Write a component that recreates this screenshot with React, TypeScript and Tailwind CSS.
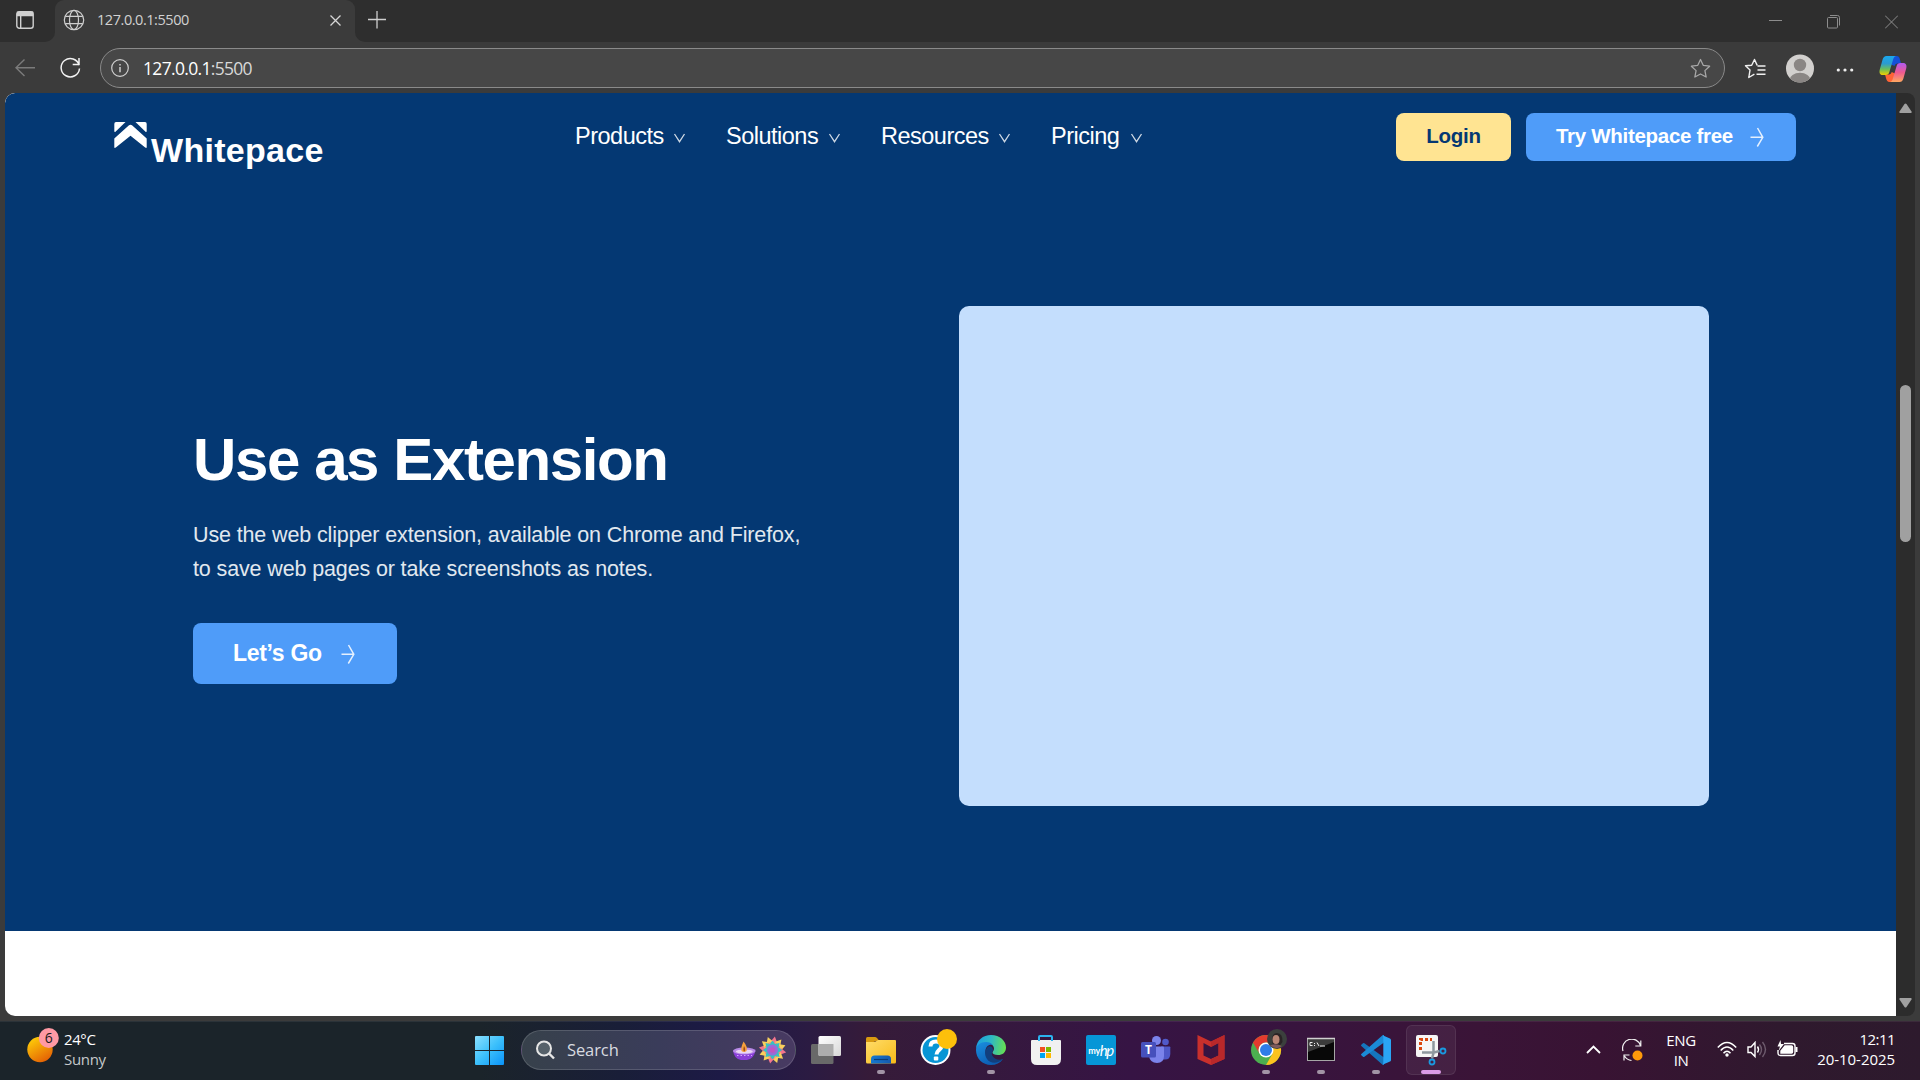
import React from "react";

const UI = "font-['Open_Sans','Noto_Sans',sans-serif]";
const ARIAL = "font-['Liberation_Sans',Arial,sans-serif]";

const TabIcon = () => (
  <svg className="block" width="18" height="18" viewBox="0 0 18 18" fill="none" stroke="#d0d0d0" strokeWidth="1.4">
    <rect x="0.8" y="0.8" width="16.4" height="16.4" rx="2.5" />
    <path d="M1.5 1.2h15v3.4h-15z" fill="#d0d0d0" />
    <path d="M4.7 5v12" />
  </svg>
);

const Globe = () => (
  <svg className="block" width="22" height="22" viewBox="0 0 22 22" fill="none" stroke="#cfcfcf" strokeWidth="1.2">
    <circle cx="11" cy="11" r="9.7" />
    <ellipse cx="11" cy="11" rx="4.5" ry="9.7" />
    <path d="M2.3 7.3h17.4M2.3 14.7h17.4" />
  </svg>
);

const star = "M10 1.4l2.6 5.6 6.1.8-4.5 4.2 1.2 6.1L10 15.2l-5.4 2.9 1.2-6.1L1.3 7.8l6.1-.8z";

const Copilot = () => (
  <svg className="block" width="28" height="28" viewBox="0 0 28 28">
    <defs>
      <linearGradient id="cpA" x1="0" y1="0" x2="0" y2="1">
        <stop offset="0" stopColor="#1aa7ee" />
        <stop offset="0.4" stopColor="#2b9bd0" />
        <stop offset="0.7" stopColor="#6cbf58" />
        <stop offset="1" stopColor="#f2d000" />
      </linearGradient>
      <linearGradient id="cpB" x1="0" y1="0" x2="0" y2="1">
        <stop offset="0" stopColor="#b05af0" />
        <stop offset="0.5" stopColor="#ee5a90" />
        <stop offset="1" stopColor="#ffa860" />
      </linearGradient>
    </defs>
    <path d="M14 1h3.5c2 0 2.800 1.200 3.400 3.200L22 8.500h-3.600c-1.600 0-2.400 1-2.800 2.400L11 9z" fill="#1450d8" />
    <path d="M14 27h-3.500c-2 0-2.800-1.200-3.300-3.200L6 19.500h4c1.500 0 2.300-1 2.700-2.400L17 19z" fill="#ff6436" />
    <path d="M7.500 1H17c-1.700.4-2.300 1.700-2.800 3.300l-3.900 13c-.6 1.900-1.600 2.700-3.600 2.700H4c-3.300 0-4-2.600-3.200-5.600L3.600 4.600C4.300 2.300 5.500 1 7.500 1z" fill="url(#cpA)" />
    <path d="M20.500 27H11c1.700-.4 2.300-1.700 2.800-3.300l3.900-13C18.300 8.800 19.300 8 21.300 8H24c3.300 0 4 2.600 3.200 5.600l-2.800 9.800c-.7 2.300-1.900 3.600-3.900 3.600z" fill="url(#cpB)" />
  </svg>
);

const BrandMark = () => (
  <svg className="block shrink-0" width="33" height="27" viewBox="0 0 33 27" fill="#fff">
    <path d="M2 0h9.500L1.500 9.800Q.3 10.500.3 9V2Q.3 0 2 0z" />
    <path d="M31 0h-9.500l10 9.800q1.200.7 1.200-.8V2Q32.700 0 31 0z" />
    <path d="M14.700 3.600Q16.500 2 18.300 3.600L32.700 16.500V25q0 1.800-1.500.6L16.500 13.700 1.800 25.600Q.3 26.800.3 25v-8.500z" />
  </svg>
);

const Arrow = () => (
  <svg className="block" width="14" height="20" viewBox="0 0 14 20" fill="none" stroke="#fff" strokeOpacity="0.85" strokeWidth="1.5">
    <path d="M0.500 10.300H13M7.500 1L12.800 10.300 7.300 19.500" />
  </svg>
);

const nav = [
  { label: "Products", box: "w-[151px]" },
  { label: "Solutions", box: "w-[155px]" },
  { label: "Resources", box: "w-[170px]" },
  { label: "Pricing", box: "w-[92px]" },
];

function BrowserChrome() {
  return (
    <div className={`${UI} h-[93px] bg-[#3b3b3b]`}>
      <div className="flex h-[42px] bg-[#3b3b3b]">
        <div className="h-[42px] w-[55px] rounded-br-[10px] bg-[#2e2e2e] pl-4 pt-[11px]">
          <TabIcon />
        </div>
        <div className="w-[300px] bg-[#2e2e2e]">
          <div className="flex h-[42px] rounded-t-[9px] bg-[#3b3b3b] pl-2">
            <div className="pt-[9px]"><Globe /></div>
            <div className="ml-[12px] w-[233px] pt-[9px] text-[14.5px] leading-[21px] tracking-[-0.45px] text-[#d2d2d2]">127.0.0.1:5500</div>
            <svg className="mt-[15px]" width="11" height="11" viewBox="0 0 11 11" stroke="#d6d6d6" strokeWidth="1.3"><path d="M.5.5l10 10M10.500.5l-10 10" /></svg>
          </div>
        </div>
        <div className="flex flex-1 rounded-bl-[10px] bg-[#2e2e2e] pl-[13px]">
          <svg className="mt-[11px]" width="18" height="18" viewBox="0 0 18 18" stroke="#cfcfcf" strokeWidth="1.300"><path d="M0 8.500h18M9 0v17.500" /></svg>
          <div className="ml-auto flex gap-[45px] pr-[22px] pt-[15px]">
            <svg width="13" height="14" viewBox="0 0 13 14" stroke="#8d8d8d"><path d="M0 5.500h13" /></svg>
            <svg width="13" height="14" viewBox="0 0 13 14" stroke="#8d8d8d" fill="none"><rect x=".5" y="2.500" width="10" height="10.500" rx="1" /><path d="M3 .5h7.500q2 0 2 2v8" /></svg>
            <svg width="13" height="14" viewBox="0 0 13 14" stroke="#8d8d8d"><path d="M0 .5l13 13M13 .5L0 13.500" /></svg>
          </div>
        </div>
      </div>
      <div className="flex h-[51px] items-start pt-[6px]">
        <svg className="ml-[15px] mt-[11px]" width="20" height="18" viewBox="0 0 20 18" stroke="#7b7b7b" strokeWidth="1.400" fill="none"><path d="M20 8.700H1M9.500.5L1 8.700l8.500 8.300" /></svg>
        <svg className="ml-[25px] mt-[9px]" width="21" height="22" viewBox="0 0 21 22" stroke="#f2f2f2" strokeWidth="1.500" fill="none"><path d="M19.200 8.200A9.200 9.200 0 1 0 19.500 11.500M19 1v6.500h-6.300" /></svg>
        <div className="ml-[19px] flex h-[40px] w-[1625px] items-center rounded-full border border-[#8a8a8a] bg-[#474747]">
          <svg className="ml-[10px]" width="18" height="18" viewBox="0 0 18 18" stroke="#d0d0d0" strokeWidth="1.200" fill="none"><circle cx="9" cy="9" r="8.300" /><path d="M9 8v5.200M9 5v1.600" strokeWidth="1.500" /></svg>
          <div className="ml-[14px] text-[17.500px] leading-[24px] tracking-[-0.68px] text-[#d8d8d8]"><span className="text-white">127.0.0.1</span>:5500</div>
          <svg className="ml-auto mr-[13px]" width="21" height="21" viewBox="0 0 20 20" stroke="#a8a8a8" strokeWidth="1.200" strokeLinejoin="round" fill="none"><path d={star} /></svg>
        </div>
        <svg className="ml-[19px] mt-[10px]" width="22" height="22" viewBox="0 0 22 22" stroke="#f0f0f0" strokeWidth="1.400" strokeLinejoin="round" fill="none"><path d="M13.200 7.400L10.500 1.500 7.700 7.200l-6.200.6 4.500 4.300-1.200 7.400 5.600-3.400M13.500 8H21.500M13.500 12H21.500M12.500 16.200H21.500" /></svg>
        <svg className="ml-[20px] mt-[6px]" width="28" height="29" viewBox="0 0 28 29">
          <defs><clipPath id="av"><circle cx="14" cy="14.500" r="14" /></clipPath></defs>
          <g clipPath="url(#av)"><rect width="28" height="29" fill="#d2d0ce" /><circle cx="14" cy="11" r="6.200" fill="#8a8684" /><ellipse cx="14" cy="26" rx="10.500" ry="7.200" fill="#8a8684" /></g>
        </svg>
        <svg className="ml-[22px] mt-[19px]" width="18" height="6" viewBox="0 0 18 6" fill="#eee"><circle cx="2.300" cy="3" r="1.600" /><circle cx="9" cy="3" r="1.600" /><circle cx="15.700" cy="3" r="1.600" /></svg>
        <div className="ml-[25px] mt-[7px]"><Copilot /></div>
      </div>
    </div>
  );
}

function Page() {
  return (
    <div className={`${ARIAL} flex h-[923px] w-[1891px] flex-col overflow-hidden rounded-l-[10px] bg-white`}>
      <section className="h-[838px] rounded-tl-[10px] bg-[#043873]">
        <header className="flex h-[68px] items-start pl-[109px]">
          <div className="flex w-[461px] pt-[29px]">
            <BrandMark />
            <div className="ml-[4px] mt-[9px] text-[34px] font-bold leading-[38px] tracking-[0.3px] text-white">Whitepace</div>
          </div>
          <nav className="flex w-[821px] pt-[30px]">
            {nav.map((n) => (
              <div key={n.label} className={`${n.box} flex justify-between pr-[40px] last:pr-0`}>
                <span className="text-[23.500px] leading-[26px] tracking-[-0.5px] text-white">{n.label}</span>
                <svg className="mt-[10px] shrink-0" width="13" height="10" viewBox="0 0 13 10" stroke="#fff" strokeOpacity="0.8" strokeWidth="1.300" fill="none"><path d="M1.500 1L6.500 8.700 11.500 1" /></svg>
              </div>
            ))}
          </nav>
          <div className="flex gap-[15px] pt-[20px] text-[20.500px] font-bold">
            <div className="flex h-[48px] w-[115px] items-center justify-center rounded-[8px] bg-[#ffe492] pb-[2px] tracking-[-0.3px] text-[#043873]">Login</div>
            <div className="flex h-[48px] w-[270px] items-center rounded-[8px] bg-[#4f9cf9] pl-[30px] text-white">
              <span className="w-[194px] whitespace-nowrap pb-[2px] tracking-[-0.3px]">Try Whitepace free</span><Arrow />
            </div>
          </div>
        </header>
        <div className="flex pl-[188px]">
          <div className="w-[766px] pt-[264px]">
            <h1 className="text-[60px] font-bold leading-[70px] tracking-[-1.400px] text-white">Use as Extension</h1>
            <p className="mt-[23px] text-[21.500px] leading-[34px] tracking-[-0.13px] text-[#e1e8ef]">
              Use the web clipper extension, available on Chrome and Firefox,<br />to save web pages or take screenshots as notes.
            </p>
            <div className="mt-[37px] flex h-[61px] w-[204px] items-center rounded-[8px] bg-[#4f9cf9] pl-[40px] text-[23px] font-bold text-white">
              <span className="w-[108px] pb-px tracking-[-0.3px]">Let’s Go</span><Arrow />
            </div>
          </div>
          <div className="mt-[145px] h-[500px] w-[750px] rounded-[10px] bg-[#c4defd]" />
        </div>
      </section>
    </div>
  );
}

const Windows = () => (
  <svg width="29" height="29" viewBox="0 0 29 29">
    <defs><linearGradient id="wn" x1="0" y1="0" x2="1" y2="1"><stop offset="0" stopColor="#8be0ff" /><stop offset="0.500" stopColor="#3cc0fb" /><stop offset="1" stopColor="#0a93f8" /></linearGradient></defs>
    <path fill="url(#wn)" d="M1 0h13v14H0V1q0-1 1-1zM15 0h13q1 0 1 1v13H15zM0 15h14v14H1q-1 0-1-1zM15 15h14v13q0 1-1 1H15z" />
  </svg>
);

const Festive = () => (
  <svg width="54" height="28" viewBox="0 0 54 28">
    <path d="M1 14.500Q2 23 9 24h6Q22.500 22.500 23.500 13.500z" fill="#8a3fd8" />
    <ellipse cx="12.300" cy="15" rx="11.400" ry="3.500" fill="#b98be8" />
    <ellipse cx="12.300" cy="15.500" rx="8.500" ry="2" fill="#ead6f5" />
    <path d="M5 19.500h15" stroke="#d2a8ff" strokeDasharray="1.500 2" />
    <path d="M11.500 5.500Q16 11 14.500 15q-2.500 2-5 0-1-3 2-9.500z" fill="#f5a03c" />
    <path d="M12 10q2 3 .5 5.500-2-.5-.5-5.500z" fill="#9c4a18" />
    {Array.from({ length: 12 }, (_, i) => (
      <path key={i} d="M36.800 6.500L40.500 .2l3.700 6.300z" fill={i % 3 ? "#f8d05c" : "#f4758e"} transform={`rotate(${i * 30 + 10} 40.500 14)`} />
    ))}
    <circle cx="40.500" cy="14" r="8" fill="#f3937f" />
    {Array.from({ length: 8 }, (_, i) => (
      <path key={i} d="M38 9l2.500-4L43 9z" fill="#35bfc4" stroke="#35bfc4" transform={`rotate(${i * 45} 40.500 14)`} />
    ))}
    <circle cx="40.500" cy="14" r="5.500" fill="#9a6bd8" />
    <circle cx="40.500" cy="14" r="2.800" fill="#c254c0" />
  </svg>
);

const TaskView = () => (
  <svg width="36" height="36" viewBox="0 0 36 36">
    <defs><linearGradient id="tv" x1="0" y1="0" x2="1" y2="1"><stop offset="0" stopColor="#fff" /><stop offset="1" stopColor="#d8d8d8" /></linearGradient></defs>
    <rect x="3" y="12" width="22.500" height="20" rx="1.500" fill="#696969" />
    <rect x="10.500" y="4" width="22.500" height="20" rx="1.500" fill="url(#tv)" />
    <path d="M10.500 12h15v12h-13.500q-1.500 0-1.500-1.500z" fill="#adadad" />
  </svg>
);

const Folder = () => (
  <svg width="36" height="36" viewBox="0 0 36 36">
    <defs><linearGradient id="fo" x1="0" y1="0" x2="1" y2="1"><stop offset="0" stopColor="#ffdc6a" /><stop offset="1" stopColor="#f8bb18" /></linearGradient>
      <linearGradient id="fb" x1="0" y1="0" x2="1" y2="0"><stop offset="0" stopColor="#1679d0" /><stop offset="1" stopColor="#1659ac" /></linearGradient></defs>
    <path d="M3 12V6.500Q3 5 4.500 5H12q1 0 2 1l2 2.500z" fill="#d99a10" />
    <path d="M3 10h9l3-2h17q1 0 1 1v21q0 1.500-1.500 1.500h-27Q3 31.500 3 30z" fill="url(#fo)" />
    <path d="M8 31.500V27q0-3.500 3.500-3.500h13q3.500 0 3.500 3.500v4.500z" fill="url(#fb)" />
    <path d="M11 27.500h14" stroke="#0b3c78" strokeWidth="1.200" />
  </svg>
);

const Help = () => (
  <svg className="overflow-visible" width="36" height="36" viewBox="0 0 36 36">
    <circle cx="17.500" cy="18" r="15" fill="#fff" />
    <circle cx="17.500" cy="18" r="13" fill="#0895d5" />
    <path d="M12.500 14.500q0-5 5.500-5t5.500 4.500c0 4-5 4.200-5 8.500" fill="none" stroke="#fff" strokeWidth="4" />
    <rect x="15.800" y="24.500" width="4.500" height="4" rx="1" fill="#fff" />
    <circle cx="29" cy="7" r="10" fill="#fdc00b" />
  </svg>
);

const Edge = () => (
  <svg width="36" height="36" viewBox="0 0 36 36">
    <defs>
      <linearGradient id="e1" x1="0" y1="0.300" x2="1" y2="0.400"><stop offset="0" stopColor="#1a9ee0" /><stop offset="0.500" stopColor="#2fb8c4" /><stop offset="1" stopColor="#66e052" /></linearGradient>
      <linearGradient id="e2" x1="0" y1="0" x2="0.600" y2="1"><stop offset="0" stopColor="#1a8fe0" /><stop offset="1" stopColor="#0c5bb0" /></linearGradient>
    </defs>
    <path d="M3 17C3.500 8 10 3 18 3c9 0 15 6 15 12.500 0 5-3.500 7.500-8 7.500-3.500 0-5.500-1.300-5.500-2.500 0-1 1.500-1.500 1.500-4 0-3-3-5.500-7-5.500C8 11 4 14 3 17z" fill="url(#e1)" />
    <path d="M3 18c0-4.500 4.500-8 10-8 3 0 5.500 1 7 3-4.500-1-7.500 2-7.500 6 0 6 5 10 10.500 10 3 0 5-.8 7-2C27 31 23 33 18 33 9.500 33 3 26.500 3 18z" fill="url(#e2)" />
    <path d="M15.500 14.500c-4 2.500-4.500 8-1.500 12.500 3.500 5 10.500 5 16 0-4 1.500-8.500.5-10.500-3-1.500-2.500 0-4 .5-6 .3-2-2-4.500-4.500-3.500z" fill="#123f7d" />
  </svg>
);

const Store = () => (
  <svg width="36" height="36" viewBox="0 0 36 36">
    <path d="M4 8h28q1 0 1 1v18q0 6-6 6H9q-6 0-6-6V9q0-1 1-1z" fill="#f1f1f1" />
    <path d="M11 9V5q0-1 1-1h11q1 0 1 1v4" fill="none" stroke="#2bb3ef" strokeWidth="2" />
    <path d="M12 15h5v5h-5z" fill="#f25022" /><path d="M18 15h5v5h-5z" fill="#7fba00" /><path d="M12 21h5v5h-5z" fill="#00a4ef" /><path d="M18 21h5v5h-5z" fill="#ffb900" />
  </svg>
);

const MyHp = () => (
  <div className="flex h-[30px] w-[30px] items-center justify-center rounded-[2px] bg-[#0696d7] font-['Lato',sans-serif] text-white">
    <span className="text-[9px] font-bold leading-none tracking-[-0.3px]">my</span>
    <span className="text-[15px] italic leading-none tracking-[-1.500px]">hp</span>
  </div>
);

const Teams = () => (
  <svg width="36" height="36" viewBox="0 0 36 36">
    <circle cx="27.500" cy="10" r="3.300" fill="#5059c9" />
    <path d="M23 14.500h8.500q.8 0 .8.800V22q0 5.500-5.300 5.500h-4z" fill="#4f58c8" />
    <circle cx="18.500" cy="8.500" r="4.500" fill="#7b83eb" />
    <path d="M11 14.500h14q1 0 1 1V24q0 7-7 7t-8-7z" fill="#7b83eb" />
    <rect x="3" y="10" width="15" height="15.500" rx="1.500" fill="#4650bc" />
    <text x="10.500" y="22" textAnchor="middle" fontSize="12" fontWeight="700" fill="#fff" fontFamily="Open Sans, sans-serif">T</text>
  </svg>
);

const McAfee = () => (
  <svg width="36" height="36" viewBox="0 0 36 36" fill="#c8302c">
    <path d="M4.500 3L18 9.500 31.500 3v24L18 33 4.500 27z M10.500 11v12.500l7.500 3.500 7.500-3.500V11L18 15z" fillRule="evenodd" />
    <path d="M18 9.500L31.500 3v24L18 33v-6l7.500-3.500V11L18 15z" fill="#b9282a" />
  </svg>
);

const Chrome = () => (
  <svg className="overflow-visible" width="36" height="36" viewBox="0 0 36 36">
    <circle cx="18" cy="18" r="15" fill="#4caf50" />
    <path d="M18 10.500h13A15 15 0 0 1 18 33l6.500-11.300z" fill="#fcc31e" />
    <path d="M5 10.500l6.500 11.200A7.500 7.500 0 0 1 18 10.500H31A15 15 0 0 0 5 10.500z" fill="#e33b2e" />
    <circle cx="18" cy="18" r="7.500" fill="#fff" /><circle cx="18" cy="18" r="6" fill="#2f7de8" />
    <circle cx="29" cy="7" r="10" fill="#3b403d" />
    <path d="M24 8q0-7 5-7 6 .5 5.500 9l-3 4H25z" fill="#2a2325" />
    <ellipse cx="28" cy="7.500" rx="3.500" ry="4.500" fill="#b98675" />
    <path d="M22 13.500q6-2.500 12 .5-5 4.500-12-.5z" fill="#7d5a5c" />
  </svg>
);

const Cmd = () => (
  <svg width="36" height="36" viewBox="0 0 36 36">
    <rect x="4.500" y="6.500" width="27" height="22" fill="#080808" stroke="#a6a6a6" />
    <path d="M5 7h26v3L5 20z" fill="#3b3b3b" /><path d="M4 6.500h28" stroke="#d0d0d0" strokeWidth="1.500" />
    <path d="M7 10.500v3h2.500M7 10.500h2.500M11.500 11v1M11.500 13v1M14 10.500l2 3.500M17 14h5" stroke="#eee" fill="none" />
  </svg>
);

const Code = () => (
  <svg width="36" height="36" viewBox="0 0 36 36">
    <path d="M3.300 14q-.6-.6 0-1.200L5 11.300q.7-.5 1.400 0L26 25.500V33q-1.300 0-2.300-1z" fill="#1576bd" />
    <path d="M3.300 22q-.6.600 0 1.200L5 24.700q.7.500 1.400 0L26 10.500V3q-1.300 0-2.300 1z" fill="#1b8ad6" />
    <path d="M24.500 3.200L32 6.500q1 .5 1 1.500v20q0 1-1 1.500l-7.500 3.300q.8-.8.8-2V5.200q0-1.200-.8-2z" fill="#2aa5f5" />
  </svg>
);

const Snip = () => (
  <svg width="36" height="36" viewBox="0 0 36 36">
    <rect x="3" y="3" width="22" height="22" rx="2" fill="#f6f6f6" />
    <path d="M7.500 18V7.500H19" fill="none" stroke="#d9480f" strokeWidth="3" strokeDasharray="3 2" />
    <path d="M20.500 9v12l-1.500 5.500M9 20.500h12l5.500-1.500" stroke="#8e989f" strokeWidth="2.500" fill="none" />
    <circle cx="30" cy="19" r="2.500" fill="none" stroke="#1a9ae0" strokeWidth="1.800" /><circle cx="19" cy="30" r="2.500" fill="none" stroke="#1a9ae0" strokeWidth="1.800" />
  </svg>
);

const apps: { icon: React.ReactNode; run?: boolean; active?: boolean }[] = [
  { icon: <TaskView /> }, { icon: <Folder />, run: true }, { icon: <Help /> }, { icon: <Edge />, run: true },
  { icon: <Store /> }, { icon: <MyHp /> }, { icon: <Teams /> }, { icon: <McAfee /> },
  { icon: <Chrome />, run: true }, { icon: <Cmd />, run: true }, { icon: <Code />, run: true }, { icon: <Snip />, active: true },
];

function Taskbar() {
  return (
    <div className={`${UI} flex h-[59px] border-t border-[#ffffff12] bg-[linear-gradient(90deg,#1b242a_0px,#1b242a_480px,#191e38_620px,#1d1a46_720px,#2b1b42_810px,#361b39_870px,#351a3c_950px,#361444_1130px,#3a1437_1480px,#381333_1600px,#2f192e_1780px,#2d1a2d_1920px)] text-[15px] leading-[20px] text-white`}>
      <div className="flex w-[475px] pl-[27px] pt-[6px]">
        <svg width="33" height="36" viewBox="0 0 33 36">
          <defs><linearGradient id="sun" x1="0.200" y1="0" x2="0.800" y2="1"><stop offset="0" stopColor="#ffd008" /><stop offset="1" stopColor="#e25a04" /></linearGradient></defs>
          <circle cx="13" cy="21.500" r="12.700" fill="url(#sun)" />
          <circle cx="21.800" cy="10" r="10" fill="#ff99a4" />
          <text x="21.800" y="15" textAnchor="middle" fontSize="14" fill="#1a1a1a" fontFamily="Open Sans, sans-serif">6</text>
        </svg>
        <div className="ml-[4px] pt-[1px] tracking-[-0.4px]">
          <div>24°C</div>
          <div className="tracking-[-0.300px] text-[#c6c9cb]">Sunny</div>
        </div>
      </div>
      <div className="w-[46px] pt-[14px]"><Windows /></div>
      <div className="mt-[8px] flex h-[40px] w-[275px] items-center rounded-full border border-white/15 bg-[linear-gradient(90deg,#37414b,#3a3c5a_50%,#483a62)] pl-[14px]">
        <svg width="19" height="20" viewBox="0 0 19 20" fill="none" stroke="#e6e6e6" strokeWidth="2"><circle cx="8" cy="8.500" r="7" fill="#56616a" /><path d="M13 13.500l5 5" strokeWidth="2.400" /></svg>
        <span className="ml-[12px] text-[16.500px] tracking-[-0.100px] text-[#d8dbe0]">Search</span>
        <div className="ml-auto mr-[9px]"><Festive /></div>
      </div>
      <div className="ml-[2px] flex w-[661px]">
        {apps.map((a, i) => (
          <div key={i} className="flex w-[55px] justify-center">
            <div className={a.active ? "mt-[3px] flex h-[50px] w-[50px] flex-col items-center rounded-[6px] border border-white/8 bg-white/6" : "mt-[3px] flex h-[50px] w-[50px] flex-col items-center border border-transparent"}>
              <div className="mt-[6px] flex h-[36px] w-[36px] items-center justify-center">{a.icon}</div>
              {a.run && <div className="mt-[2px] h-[4px] w-[8px] rounded-full bg-[#a294a6]" />}
              {a.active && <div className="mt-[2px] h-[4px] w-[20px] shrink-0 rounded-full bg-[#dc9be8]" />}
            </div>
          </div>
        ))}
      </div>
      <div className="ml-[127px] flex">
        <svg className="mt-[23px]" width="15" height="9" viewBox="0 0 15 9" fill="none" stroke="#fff" strokeWidth="1.800"><path d="M1 8l6.500-6.500L14 8" /></svg>
        <svg className="ml-[21px] mt-[17px]" width="21" height="23" viewBox="0 0 21 23" fill="none" stroke="#f2f2f2" strokeWidth="1.200"><path d="M1 12A9 9 0 0 1 18.500 6.500M18.800 1.500v5.500h-5.500M2 21.500V16h5.500M2.500 17q2.500 4 7 4.500" /><circle cx="15.500" cy="16.500" r="5" fill="#ff9a0a" stroke="none" /></svg>
        <div className="ml-[22px] w-[32px] pt-[8px] text-center tracking-[-0.4px]">ENG<br />IN</div>
        <svg className="ml-[20px] mt-[19px]" width="20" height="17" viewBox="0 0 20 17" fill="none" stroke="#fff" strokeWidth="1.500"><path d="M.8 6.500Q10-3.500 19.200 6.500M3.700 9.500Q10 2.500 16.300 9.500M6.500 12.300Q10 8 13.500 12.300" /><circle cx="10" cy="14" r="1.700" fill="#fff" stroke="none" /></svg>
        <svg className="ml-[10px] mt-[19px]" width="21" height="18" viewBox="0 0 21 18" fill="none" stroke="#fff" strokeWidth="1.400"><path d="M1 6h3l4-4.500v14L4 11.500H1z" /><path d="M10.500 5.500q2 3 0 6" /><path d="M12.500 3.500q4 5 0 10.500M15.500 1q6 7.500 0 15" stroke="#6d5b6d" /></svg>
        <svg className="ml-[9px] mt-[18px]" width="21" height="18" viewBox="0 0 21 18" fill="none" stroke="#fff" strokeWidth="1.400"><path d="M7 3.500h8.500q2.500 0 2.500 2.500v7q0 2.500-2.500 2.500H3.500Q1 15.500 1 13V10" /><path d="M4 13V11l4-5h6.500q1 0 1 1V12q0 1-1 1z" fill="#fff" /><path d="M3.500 0L.5 6.500H3L1.500 11 7 4H4z" fill="#fff" stroke="none" /><path d="M19.500 7v5" strokeWidth="2" /></svg>
        <div className="ml-[10px] w-[87px] pt-[7px] text-right tracking-[-0.05px]"><div className="tracking-[-0.550px]">12:11</div><div>20-10-2025</div></div>
      </div>
    </div>
  );
}

export default function App() {
  return (
    <div className="h-[1080px] w-[1920px] overflow-hidden bg-[#3b3b3b]">
      <BrowserChrome />
      <div className="flex h-[928px] pl-[5px]">
        <Page />
        <div className="flex h-[923px] w-[19px] flex-col items-center rounded-r-[8px] bg-[#2c2c2c] pt-[10px]">
          <svg width="13" height="11" viewBox="0 0 13 11" fill="#a0a0a0"><path d="M5.500 1q1-1 2 0l5 7.500q.5 1.500-.5 1.500H1Q0 10 .5 8.500z" /></svg>
          <div className="mt-[271px] h-[157px] w-[11px] shrink-0 rounded-full bg-[#a0a0a0]" />
          <svg className="mb-[8px] mt-auto" width="13" height="11" viewBox="0 0 13 11" fill="#a0a0a0"><path d="M5.500 10q1 1 2 0l5-7.500Q13 1 12 1H1Q0 1 .5 2.500z" /></svg>
        </div>
      </div>
      <Taskbar />
    </div>
  );
}
